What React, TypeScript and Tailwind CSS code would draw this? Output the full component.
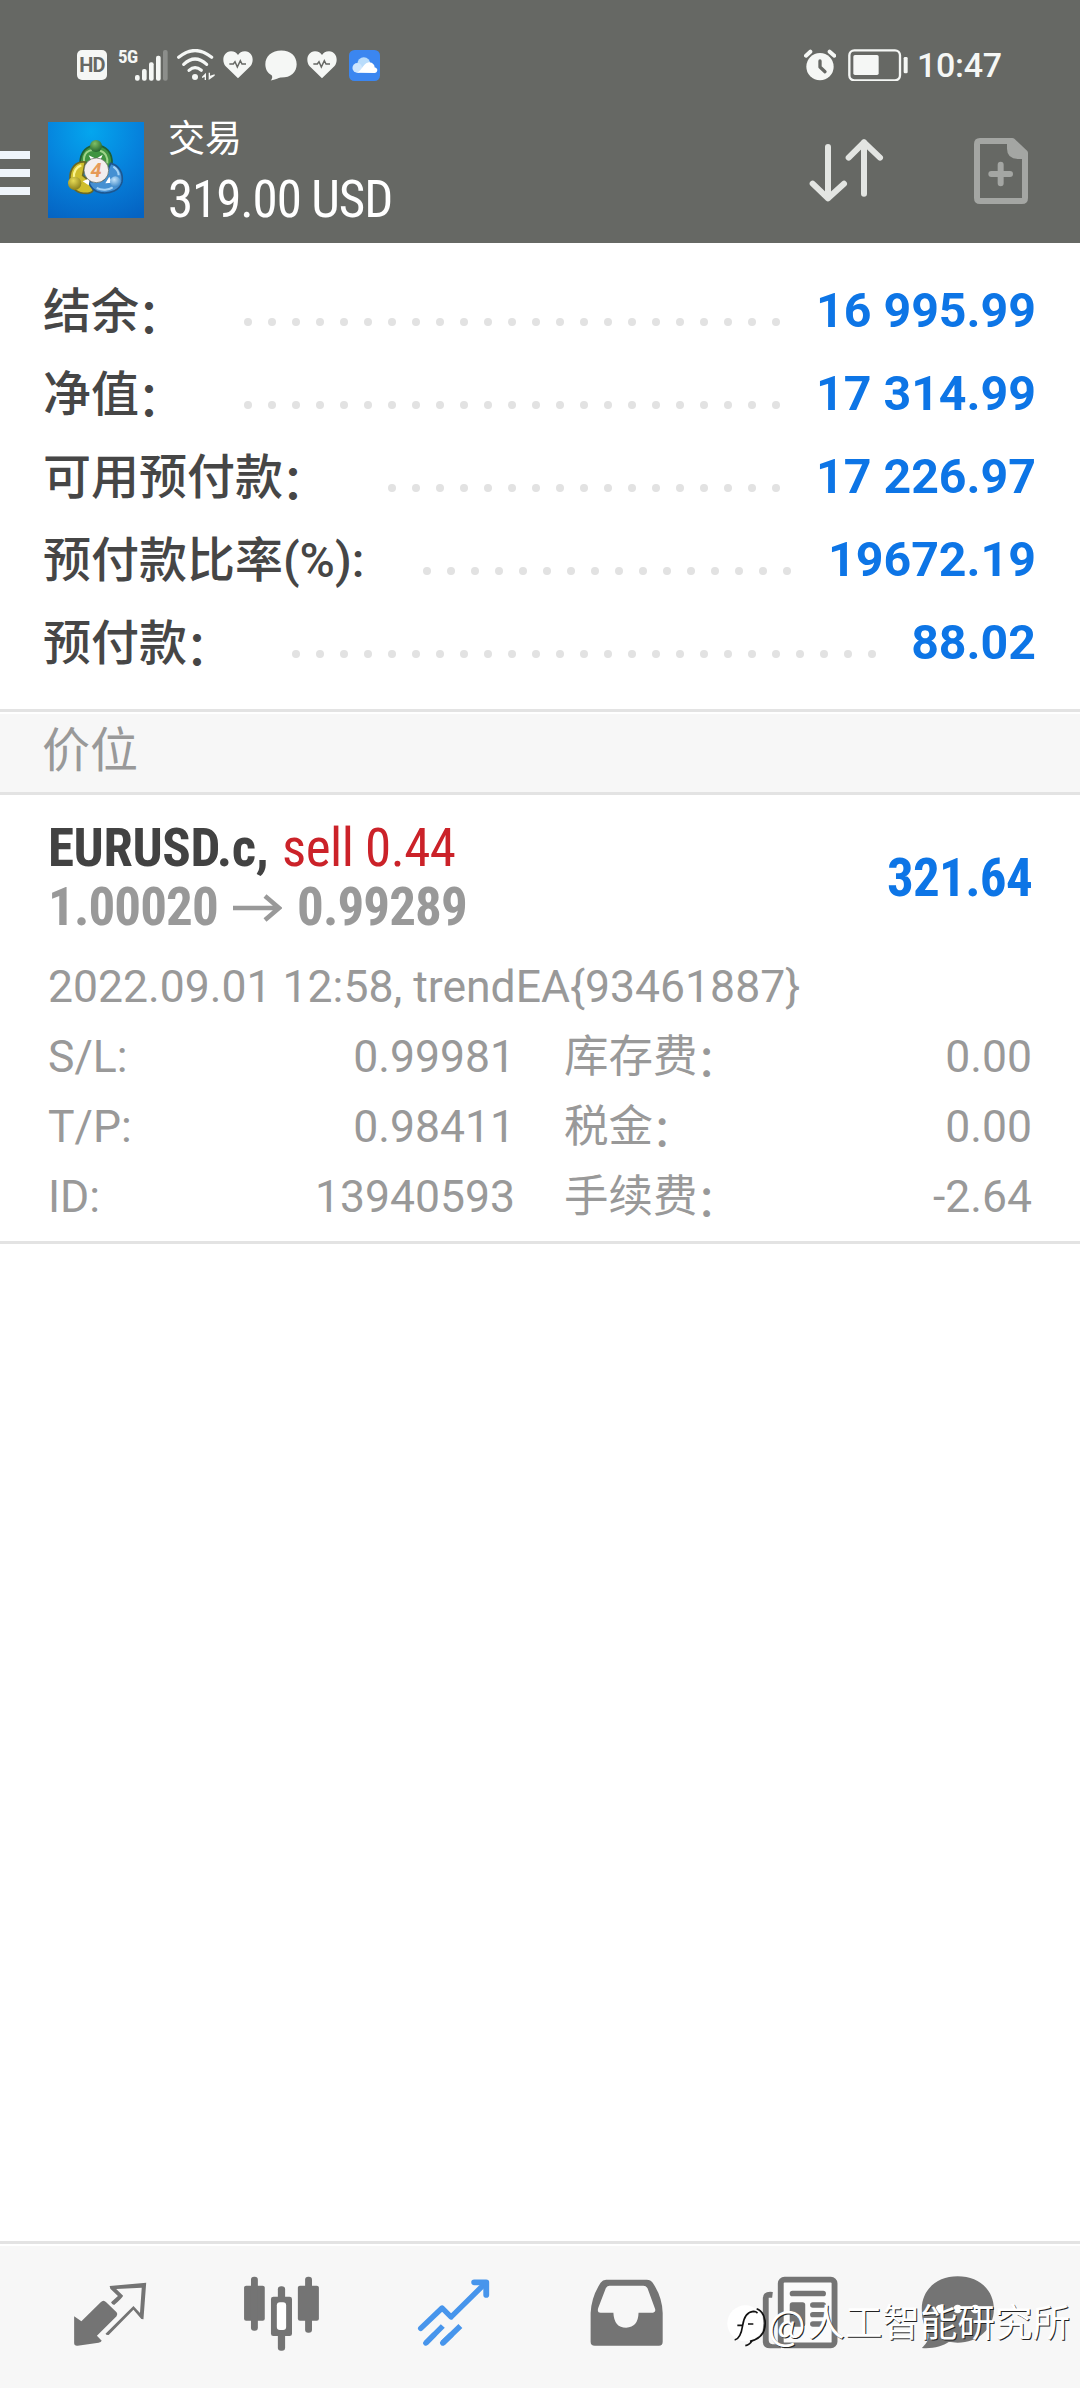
import type { ReactNode } from "react";

const accountRows = [
  { label: "结余：", value: "16 995.99", dots: 23, end: 780 },
  { label: "净值：", value: "17 314.99", dots: 23, end: 780 },
  { label: "可用预付款：", value: "17 226.97", dots: 17, end: 780 },
  { label: "预付款比率(%):", value: "19672.19", dots: 16, end: 791 },
  { label: "预付款：", value: "88.02", dots: 25, end: 876 },
];

const detailRows = [
  ["S/L:", "0.99981", "库存费：", "0.00"],
  ["T/P:", "0.98411", "税金：", "0.00"],
  ["ID:", "13940593", "手续费：", "-2.64"],
];

/* Full-width colons sit on the Latin baseline. */
function Label({ text }: { text: string }) {
  if (!text.endsWith("：")) return <>{text}</>;
  return (
    <>
      {text.slice(0, -1)}
      <span className="inline-block -translate-x-0.5 translate-y-[5px]">：</span>
    </>
  );
}

function HeartIcon() {
  return (
    <svg viewBox="0 0 90 84" className="h-7 w-[30px]">
      <path d="M45 82 L8 46 C-5 30 0 2 24 1 C34 1 41 6 45 12 C49 6 56 1 66 1 C90 2 95 30 82 46 Z" fill="#f5f7f5" />
      <path d="M19 39 H31 L36 32 L43 48 L52 29 L57 39 H69" fill="none" stroke="#666864" strokeWidth="4.5" />
    </svg>
  );
}

function StatusBar() {
  return (
    <div className="flex h-[100px] items-center pt-[30px] pl-[77px] text-[#f5f7f5]">
      <div className="flex h-[30px] w-[30px] items-center justify-center rounded-[5px] bg-[#f5f7f5] text-[20px] leading-none font-bold text-[#666864]">
        <span className="tracking-[-0.7px]">HD</span>
      </div>
      <div className="ml-[11px] flex h-8 w-[50px] items-start">
        <span className="w-[17px] text-[19px] leading-[15px] font-bold tracking-[-0.5px] [font-stretch:condensed]">5G</span>
        <svg viewBox="0 0 99 96" className="h-8 w-[33px]">
          <g fill="#f5f7f5">
            <rect x="0" y="78" width="14" height="17" rx="6" />
            <rect x="21" y="60" width="14" height="35" rx="6" />
            <rect x="42" y="40" width="14" height="55" rx="6" />
            <rect x="63" y="20" width="14" height="75" rx="6" />
          </g>
          <rect x="84" y="3" width="14" height="92" rx="6" fill="#8c8e8b" />
        </svg>
      </div>
      <svg viewBox="0 0 114 96" className="ml-[9px] h-8 w-[38px]" fill="none" stroke="#f5f7f5" strokeWidth="9.5" strokeLinecap="round">
        <path d="M5 25 Q54 -16 104 25" />
        <path d="M20 46 Q54 14 89 46" />
        <path d="M36 64 Q54 48 73 64" />
        <circle cx="54" cy="84" r="9" fill="#f5f7f5" stroke="none" />
        <path d="M87 71 V93 H83 V84 L75 87 V83 Z M95 93 V71 H99 V80 L113 76 V80 Z" fill="#f5f7f5" stroke="none" />
      </svg>
      <div className="ml-[8px]"><HeartIcon /></div>
      <svg viewBox="0 0 96 92" className="ml-3 h-[31px] w-8">
        <path d="M49 1 C77 1 95 18 95 42 C95 66 77 82 49 82 C43 82 36 87 17 91 C22 86 23 79 20 75 C7 68 1 56 1 42 C1 18 21 1 49 1 Z" fill="#f5f7f5" />
      </svg>
      <div className="ml-[10px]"><HeartIcon /></div>
      <svg viewBox="0 0 90 90" className="ml-3 h-[31px] w-[31px]">
        <rect width="90" height="90" rx="16" fill="#3b86f0" />
        <circle cx="43" cy="40" r="19" fill="#b9dcfb" />
        <circle cx="24" cy="52" r="14" fill="#cfe6fd" />
        <path d="M18 66 C36 66 38 40 56 36 C68 34 76 46 74 50 C86 52 84 66 74 67 Z" fill="#ffffff" />
      </svg>
      <svg viewBox="0 0 96 96" className="ml-[424px] h-8 w-8">
        <circle cx="48" cy="53" r="41" fill="#f5f7f5" />
        <path d="M6 20 L19 8 M77 8 L91 20" stroke="#f5f7f5" strokeWidth="12" strokeLinecap="round" />
        <path d="M48 36 V54 L63 68" fill="none" stroke="#666864" strokeWidth="10" strokeLinecap="round" strokeLinejoin="round" />
      </svg>
      <svg viewBox="0 0 180 96" className="ml-[12px] h-8 w-[60px]">
        <rect x="4" y="4" width="152" height="90" rx="15" fill="none" stroke="#f5f7f5" strokeWidth="7" />
        <rect x="16" y="18" width="76" height="60" rx="5" fill="#f5f7f5" />
        <rect x="167" y="24" width="12" height="49" rx="4" fill="#f5f7f5" />
      </svg>
      <span className="ml-[9px] text-[34px] leading-8 font-medium tracking-[-0.3px]">10:47</span>
    </div>
  );
}

function AppLogo() {
  return (
    <svg viewBox="0 0 288 288" className="ml-[18px] h-24 w-24">
      <defs>
        <radialGradient id="sky" cx="0.45" cy="0.1" r="1">
          <stop offset="0" stopColor="#04a6ee" />
          <stop offset="0.5" stopColor="#0682dc" />
          <stop offset="1" stopColor="#0563c2" />
        </radialGradient>
        <radialGradient id="green" cx="0.4" cy="0.3" r="0.8">
          <stop offset="0" stopColor="#7fbf66" />
          <stop offset="1" stopColor="#1a5c28" />
        </radialGradient>
        <radialGradient id="gold" cx="0.4" cy="0.3" r="0.8">
          <stop offset="0" stopColor="#e6da55" />
          <stop offset="1" stopColor="#807512" />
        </radialGradient>
        <radialGradient id="blue" cx="0.4" cy="0.3" r="0.8">
          <stop offset="0" stopColor="#c3e3fa" />
          <stop offset="1" stopColor="#2f7fc4" />
        </radialGradient>
      </defs>
      <rect width="288" height="288" fill="url(#sky)" />
      <path d="M96 126 C96 88 118 70 144 70 C174 70 194 92 192 126 C190 146 180 150 166 146 L144 112 L118 122 Z" fill="#3f9440" stroke="#1f5f35" strokeWidth="5" />
      <path d="M108 118 C106 92 122 82 140 84 M156 86 C172 90 180 106 178 124" fill="none" stroke="#9fd48a" strokeWidth="6" />
      <path d="M112 120 C84 116 64 140 66 172 C68 202 92 216 120 214 C140 210 142 196 132 184 L104 160 Z" fill="#cfbe2c" stroke="#6b6824" strokeWidth="5" />
      <path d="M78 166 C76 148 86 134 100 130" fill="none" stroke="#fbf48f" strokeWidth="7" />
      <path d="M188 124 C214 130 226 154 222 180 C214 206 188 216 158 212 C138 208 126 194 122 180 L166 174 Z" fill="#4590d2" stroke="#1d5791" strokeWidth="5" />
      <path d="M146 198 C162 206 182 204 194 196 M196 134 C208 142 212 152 212 160" fill="none" stroke="#a5d3f6" strokeWidth="6" />
      <path d="M122 100 L144 110 L164 98 L154 122 H134 Z M104 178 L126 168 L122 190 Z M172 184 L184 164 L192 182 Z" fill="#ffffff" />
      <circle cx="144" cy="72" r="18" fill="url(#green)" />
      <circle cx="80" cy="184" r="20" fill="url(#gold)" />
      <circle cx="202" cy="179" r="16" fill="url(#blue)" />
      <circle cx="145" cy="145" r="37" fill="#f3eeee" stroke="#555f50" strokeWidth="2" />
      <text x="144" y="166" textAnchor="middle" fontSize="60" fontWeight="700" fontStyle="italic" fill="#e69a58">4</text>
    </svg>
  );
}

function Toolbar() {
  return (
    <div className="flex h-[143px] items-start pt-[19px]">
      <div className="mt-8 flex w-[30px] flex-col gap-[10px]">
        <div className="h-2 bg-[#eff5fb]" />
        <div className="h-2 bg-[#eff5fb]" />
        <div className="h-2 bg-[#eff5fb]" />
      </div>
      <div className="mt-[3px]"><AppLogo /></div>
      <div className="ml-6 w-[240px] whitespace-nowrap text-white">
        <div className="text-[37px] leading-[42px]">交易</div>
        <div className="mt-[9px] text-[51px] leading-[60px] tracking-[-1.1px] [font-stretch:condensed]">319.00 USD</div>
      </div>
      <svg viewBox="0 0 228 198" className="mt-[20px] ml-[400px] h-[66px] w-[76px]" fill="none" stroke="#e3e5e2" strokeWidth="18" strokeLinecap="round" strokeLinejoin="round">
        <path d="M60 24 V178 M14 134 L60 178 L108 134" />
        <path d="M168 164 V10 M122 56 L168 10 L216 56" />
      </svg>
      <svg viewBox="0 0 162 198" className="mt-[19px] ml-[90px] h-[66px] w-[54px]">
        <path d="M18 9 H115 L153 45 V180 Q153 189 144 189 H18 Q9 189 9 180 V18 Q9 9 18 9 Z" fill="none" stroke="#a4a6a3" strokeWidth="18" strokeLinejoin="round" />
        <path d="M99 9 H116 L158 48 V63 H135 Q99 63 99 32 Z" fill="#a4a6a3" />
        <path d="M80 80 V136 M52 108 H108" stroke="#a4a6a3" strokeWidth="18" strokeLinecap="round" />
      </svg>
    </div>
  );
}

function AccountSummary() {
  return (
    <section className="h-[466px] pt-[26px]">
      {accountRows.map((row) => (
        <div key={row.label} className="flex h-[83.1px] items-center pr-[44px] pl-[43px] text-[48px] leading-[60px]">
          <div className="flex items-center justify-between" style={{ width: row.end - 43 }}>
            <span className="mt-[2px] w-0 font-medium whitespace-nowrap text-[#464646]"><Label text={row.label} /></span>
            <span className="mt-[23px] flex gap-[16px]">
              {Array.from({ length: row.dots }, (_, i) => (
                <i key={i} className="block h-2 w-2 rounded-full bg-[#e2e2e2]" />
              ))}
            </span>
          </div>
          <span className="ml-auto text-[48.3px] font-bold text-[#0d75e6]">{row.value}</span>
        </div>
      ))}
    </section>
  );
}

function Position() {
  return (
    <section className="h-[449px] border-b-[3px] border-[#e3e3e3] pt-6 pr-12 pl-12 text-[#999999]">
      <div className="flex items-center justify-between text-[53px] leading-[59px] font-bold whitespace-nowrap [font-stretch:condensed]">
        <div>
          <div className="flex">
            <span className="w-[234px] tracking-[-0.4px] text-[#424242]">EURUSD.c,</span>
            <span className="font-normal tracking-[-0.5px] text-[#cb2229]">sell 0.44</span>
          </div>
          <div className="flex items-center">
            <span className="w-[184px] tracking-[-0.9px]">1.00020</span>
            <svg viewBox="0 0 50 28" className="h-7 w-[50px]" fill="none" stroke="#999999" strokeWidth="4.5">
              <path d="M1 14 H47 M33 2 L47 14 L33 26" />
            </svg>
            <span className="ml-[15px] tracking-[-0.9px]">0.99289</span>
          </div>
        </div>
        <span className="tracking-[-0.7px] text-[#0d75e6]">321.64</span>
      </div>
      <div className="mt-[15px] text-[44.5px] leading-[70px]">
        <div>2022.09.01 12:58, trendEA{"{93461887}"}</div>
        {detailRows.map(([a, b, c, d]) => (
          <div key={a} className="flex whitespace-nowrap">
            <span className="w-[200px]">{a}</span>
            <span className="w-[267px] text-right">{b}</span>
            <span className="ml-[49px] w-[250px]"><Label text={c} /></span>
            <span className="ml-auto">{d}</span>
          </div>
        ))}
      </div>
    </section>
  );
}

function NavIcon({ box, children }: { box: string; children: ReactNode }) {
  return (
    <svg viewBox={box} preserveAspectRatio="none" className="h-20 w-20 shrink-0" fill="#747474">
      {children}
    </svg>
  );
}

function BottomNav() {
  return (
    <nav className="flex h-[147px] gap-[92px] border-t-[3px] border-[#e3e3e3] bg-[#f7f7f7] pt-[29px] pl-[70px] shadow-[inset_0_2px_0_#ffffff]">
      <NavIcon box="203 160 232 240">
        <path d="M215 290 L236 305 L292 248 Q300 239 308 248 L338 278 Q343 284 338 290 L281 348 L295 363 Q293 367 286 369 L225 378 Q215 379 215 370 Z" />
        <path fillRule="evenodd" d="M318 199 L424 189 L416 299 L410 298 L387 270 L315 346 Q308 347 306 342 L387 259 L406 280 L411 204 L337 208 L357 228 Q357 232 331 256 Q324 254 322 248 L342 229 L320 207 Z" />
      </NavIcon>
      <NavIcon box="703 160 232 240">
        <rect x="709" y="198" width="60" height="105" rx="6" />
        <rect x="729" y="171" width="20" height="162" rx="9" />
        <rect x="865" y="198" width="61" height="105" rx="6" />
        <rect x="886" y="171" width="20" height="168" rx="9" />
        <rect x="807" y="200" width="21" height="193" rx="9" />
        <rect x="787" y="231" width="61" height="118" rx="7" />
        <rect x="804" y="248" width="27" height="83" rx="9" fill="#ffffff" />
      </NavIcon>
      <NavIcon box="1202.5 160 232 240">
        <g fill="none" stroke="#4795ec" strokeWidth="16" strokeLinecap="round" strokeLinejoin="round">
          <path d="M1222 326 L1284 265 L1310 292 L1408 192" />
          <path d="M1377 188 H1412 V226" strokeWidth="17" />
          <path d="M1237 370 L1286 319 M1286 370 L1337 319" strokeLinecap="butt" />
          <path d="M1237 370 L1260 346 M1286 370 L1310 346" />
        </g>
      </NavIcon>
      <NavIcon box="133.6 160 232 240">
        <path fillRule="evenodd" d="M192 180 H310 Q321 180 327 189 Q355 232 356 280 V366 Q356 378 345 378 H159 Q147 378 147 366 V280 Q149 232 176 189 Q182 180 192 180 Z M202 198 Q195 198 191 206 L169 265 Q165 279 176 279 H213 Q215 324 250 324 Q285 322 286 279 H328 Q338 277 333 265 L312 206 Q308 198 300 198 Z" />
      </NavIcon>
      <NavIcon box="633 160 232 240">
        <path d="M676 217 Q647 213 647 236 V368 Q648 386 668 386 H700 V374 H675 Q663 372 664 358 V234 H674 Z" />
        <rect x="699" y="180" width="156" height="197" rx="11" fill="#fbfbfb" stroke="#747474" strokeWidth="17" />
        <rect x="725" y="213" width="105" height="17" rx="8" />
        <rect x="725" y="248" width="45" height="73" rx="8" />
        <rect x="784" y="248" width="46" height="16" rx="8" />
        <rect x="784" y="277" width="46" height="16" rx="8" />
        <rect x="784" y="305" width="46" height="16" rx="8" />
      </NavIcon>
      <div className="-ml-3">
        <NavIcon box="1098 160 232 240">
          <path d="M1213 170 C1275 170 1318 211 1318 268 C1318 328 1272 369 1213 369 C1203 369 1195 367 1187 367 C1170 379 1140 388 1109 385 C1122 372 1132 360 1127 338 C1115 320 1109 298 1109 268 C1109 211 1152 170 1213 170 Z" />
          <g fill="#ffffff">
            <circle cx="1162" cy="268" r="13" />
            <circle cx="1213" cy="268" r="13" />
            <circle cx="1264" cy="268" r="13" />
          </g>
        </NavIcon>
      </div>
    </nav>
  );
}

function Watermark() {
  return (
    <div className="absolute right-[10px] bottom-[40px] flex items-center text-[37.5px] leading-[50px] whitespace-nowrap text-white [text-shadow:1px_1px_0_#222222]">
      <svg viewBox="0 0 126 132" className="mt-[5px] h-11 w-[42px]">
        <circle cx="58" cy="58" r="54" fill="#ffffff" />
        <path d="M72 112 Q122 100 117 50 Q113 22 92 14" fill="none" stroke="#111111" strokeWidth="5" />
        <path d="M26 108 Q44 104 50 64 Q56 24 82 22 Q92 22 94 28 M34 64 H50 M66 60 H82 M58 125 Q72 122 78 110" fill="none" stroke="#111111" strokeWidth="5" />
      </svg>
      <span className="pr-[2px] font-['Noto_Sans_CJK_SC'] text-[40px]">@</span>
      <span>人工智能研究所</span>
    </div>
  );
}

export default function App() {
  return (
    <div className="relative flex h-[2388px] w-[1080px] flex-col overflow-hidden bg-white font-[Roboto,'Noto_Sans_CJK_SC',sans-serif]">
      <header className="h-[243px] bg-[#666864]">
        <StatusBar />
        <Toolbar />
      </header>
      <AccountSummary />
      <div className="h-[86px] border-y-[3px] border-[#e3e3e3] bg-[#f7f7f7] pl-[42px] text-[48px] leading-[78px] text-[#999999] shadow-[inset_0_2px_0_#ffffff]">价位</div>
      <Position />
      <main className="flex-1" />
      <BottomNav />
      <Watermark />
    </div>
  );
}
